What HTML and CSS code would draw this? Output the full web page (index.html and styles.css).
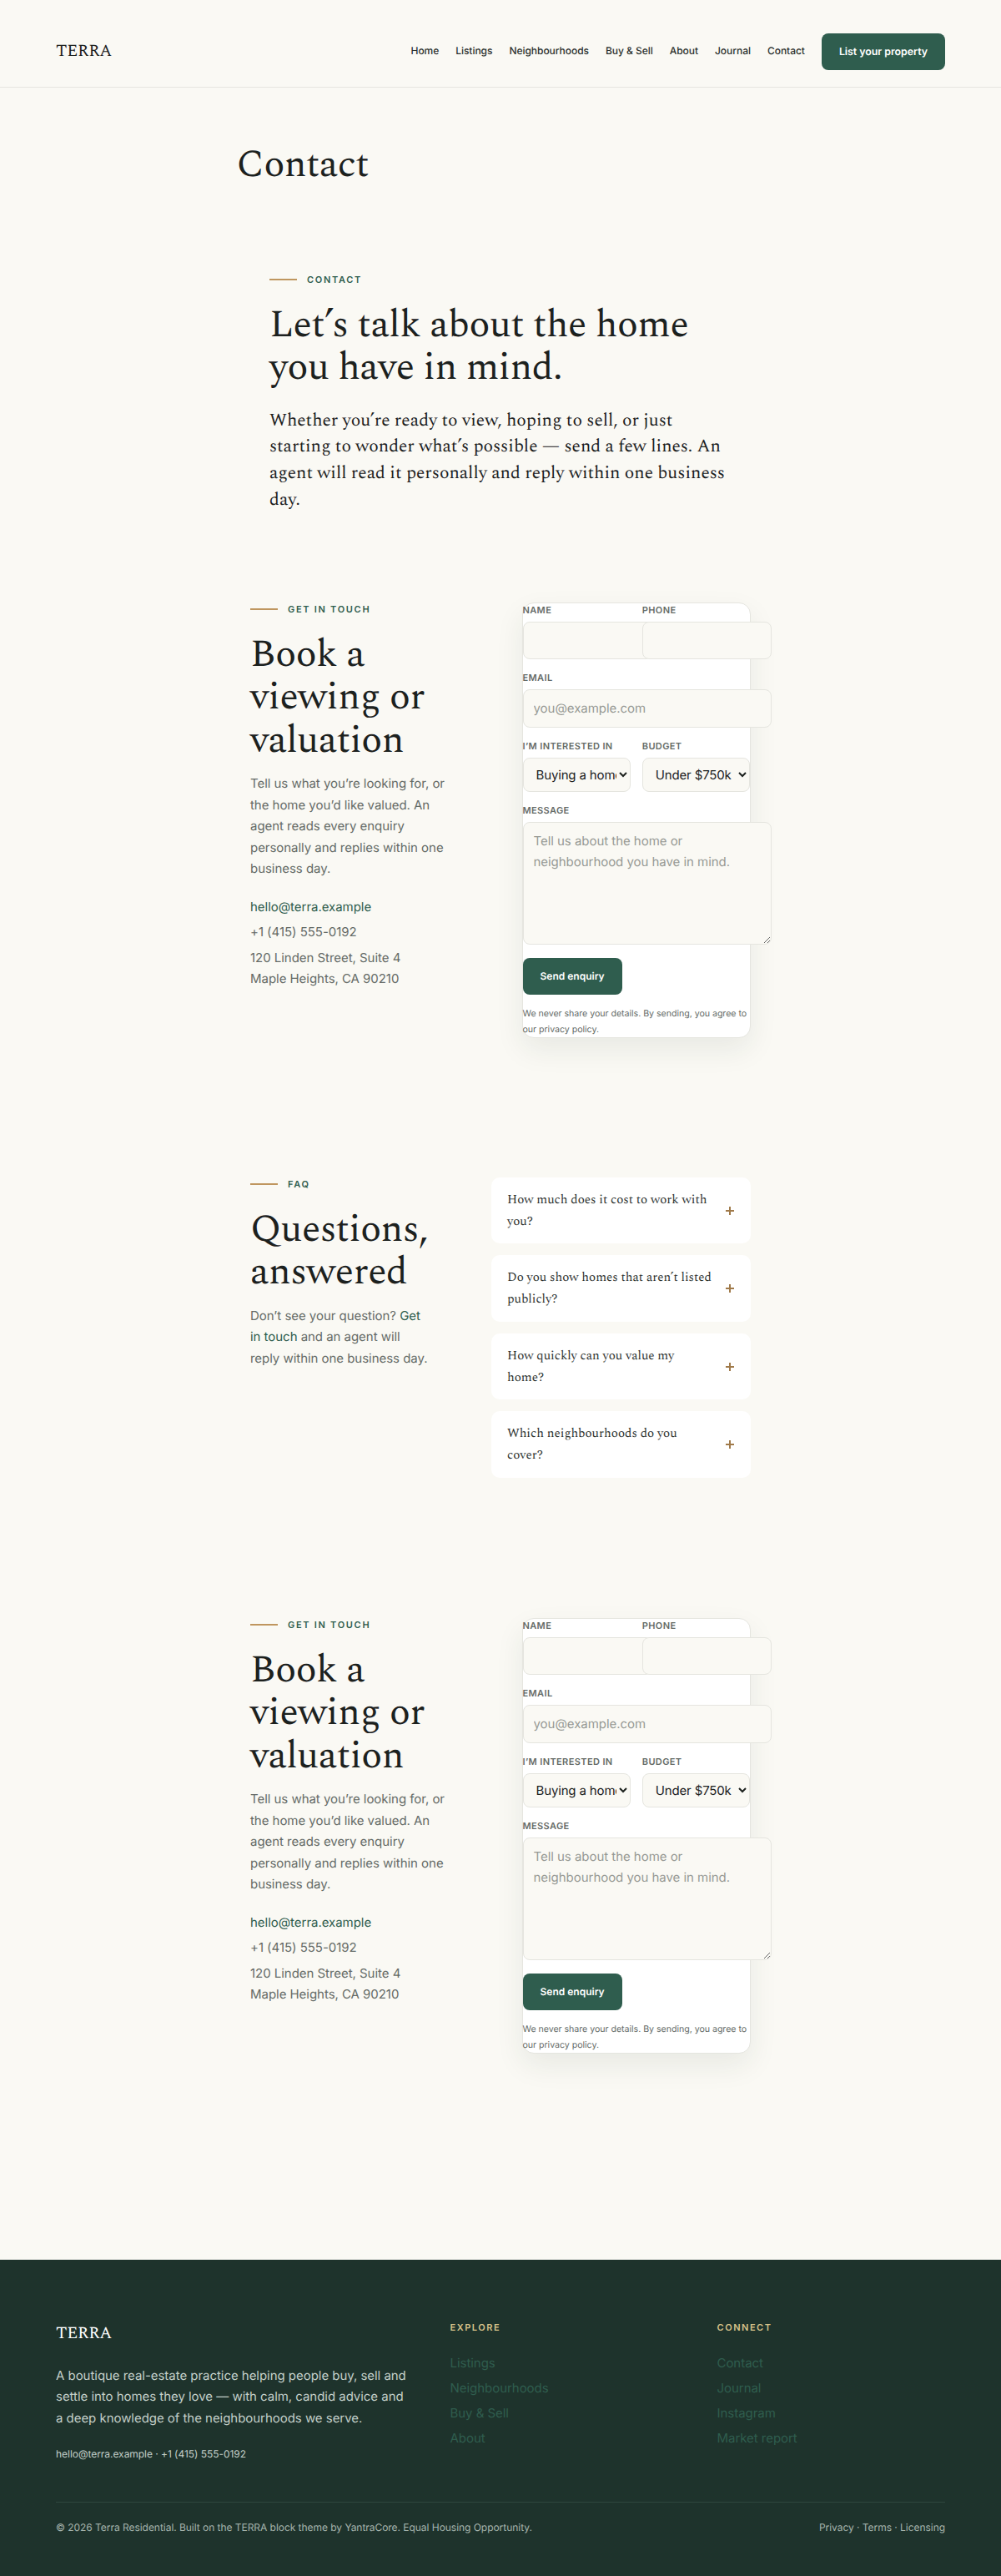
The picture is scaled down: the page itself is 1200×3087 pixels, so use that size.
FILE: index.html
```html
<!DOCTYPE html>
<html lang="en">
<head>
    <meta charset="UTF-8">
    <meta name="viewport" content="width=device-width, initial-scale=1.0">
    <title>Contact - TERRA</title>
    <link rel="stylesheet" href="styles.css">
</head>
<body>
    <header class="site-header">
        <a href="#" class="logo">TERRA</a>
        <nav class="main-nav">
            <a href="#">Home</a>
            <a href="#">Listings</a>
            <a href="#">Neighbourhoods</a>
            <a href="#">Buy &amp; Sell</a>
            <a href="#">About</a>
            <a href="#">Journal</a>
            <a href="#">Contact</a>
            <a href="#" class="btn">List your property</a>
        </nav>
    </header>

    <main>
        <h1 class="page-title">Contact</h1>

        <section class="intro">
            <p class="eyebrow">Contact</p>
            <h2>Let’s talk about the home<br>you have in mind.</h2>
            <p class="lead">Whether you’re ready to view, hoping to sell, or just<br>starting to wonder what’s possible — send a few lines. An<br>agent will read it personally and reply within one business<br>day.</p>
        </section>

        <section class="enquiry">
            <div class="enquiry-text">
                <p class="eyebrow">Get in touch</p>
                <h2>Book a<br>viewing or<br>valuation</h2>
                <p class="muted">Tell us what you’re looking for, or the home you’d like valued. An agent reads every enquiry personally and replies within one business day.</p>
                <div class="contact-lines">
                    <a href="#">hello@terra.example</a>
                    <span>+1 (415) 555-0192</span>
                    <span>120 Linden Street, Suite 4<br>Maple Heights, CA 90210</span>
                </div>
            </div>
            <form class="enquiry-form">
                <div class="form-row">
                    <div class="field">
                        <label>Name</label>
                        <input type="text">
                    </div>
                    <div class="field">
                        <label>Phone</label>
                        <input type="tel">
                    </div>
                </div>
                <div class="field">
                    <label>Email</label>
                    <input type="email" placeholder="you@example.com">
                </div>
                <div class="form-row">
                    <div class="field">
                        <label>I’m interested in</label>
                        <select><option>Buying a home</option></select>
                    </div>
                    <div class="field">
                        <label>Budget</label>
                        <select><option>Under $750k</option></select>
                    </div>
                </div>
                <div class="field">
                    <label>Message</label>
                    <textarea rows="5" placeholder="Tell us about the home or neighbourhood you have in mind."></textarea>
                </div>
                <button type="button" class="btn btn-send">Send enquiry</button>
                <p class="form-note">We never share your details. By sending, you agree to our privacy policy.</p>
            </form>
        </section>

        <section class="faq">
            <div class="faq-text">
                <p class="eyebrow">FAQ</p>
                <h2>Questions,<br>answered</h2>
                <p class="muted">Don’t see your question? <a href="#">Get in touch</a> and an agent will reply within one business day.</p>
            </div>
            <div class="faq-list">
                <div class="faq-item"><span>How much does it cost to work with<br>you?</span><i class="plus"></i></div>
                <div class="faq-item"><span>Do you show homes that aren’t listed<br>publicly?</span><i class="plus"></i></div>
                <div class="faq-item"><span>How quickly can you value my<br>home?</span><i class="plus"></i></div>
                <div class="faq-item"><span>Which neighbourhoods do you<br>cover?</span><i class="plus"></i></div>
            </div>
        </section>

        <section class="enquiry">
            <div class="enquiry-text">
                <p class="eyebrow">Get in touch</p>
                <h2>Book a<br>viewing or<br>valuation</h2>
                <p class="muted">Tell us what you’re looking for, or the home you’d like valued. An agent reads every enquiry personally and replies within one business day.</p>
                <div class="contact-lines">
                    <a href="#">hello@terra.example</a>
                    <span>+1 (415) 555-0192</span>
                    <span>120 Linden Street, Suite 4<br>Maple Heights, CA 90210</span>
                </div>
            </div>
            <form class="enquiry-form">
                <div class="form-row">
                    <div class="field">
                        <label>Name</label>
                        <input type="text">
                    </div>
                    <div class="field">
                        <label>Phone</label>
                        <input type="tel">
                    </div>
                </div>
                <div class="field">
                    <label>Email</label>
                    <input type="email" placeholder="you@example.com">
                </div>
                <div class="form-row">
                    <div class="field">
                        <label>I’m interested in</label>
                        <select><option>Buying a home</option></select>
                    </div>
                    <div class="field">
                        <label>Budget</label>
                        <select><option>Under $750k</option></select>
                    </div>
                </div>
                <div class="field">
                    <label>Message</label>
                    <textarea rows="5" placeholder="Tell us about the home or neighbourhood you have in mind."></textarea>
                </div>
                <button type="button" class="btn btn-send">Send enquiry</button>
                <p class="form-note">We never share your details. By sending, you agree to our privacy policy.</p>
            </form>
        </section>
    </main>

    <footer class="site-footer">
        <div class="footer-grid">
            <div class="footer-about">
                <a href="#" class="logo">TERRA</a>
                <p>A boutique real-estate practice helping people buy, sell and settle into homes they love — with calm, candid advice and a deep knowledge of the neighbourhoods we serve.</p>
                <p class="footer-contact">hello@terra.example · +1 (415) 555-0192</p>
            </div>
            <div class="footer-col">
                <h3>Explore</h3>
                <a href="#">Listings</a>
                <a href="#">Neighbourhoods</a>
                <a href="#">Buy &amp; Sell</a>
                <a href="#">About</a>
            </div>
            <div class="footer-col">
                <h3>Connect</h3>
                <a href="#">Contact</a>
                <a href="#">Journal</a>
                <a href="#">Instagram</a>
                <a href="#">Market report</a>
            </div>
        </div>
        <div class="footer-bottom">
            <span>© 2026 Terra Residential. Built on the TERRA block theme by YantraCore. Equal Housing Opportunity.</span>
            <span>Privacy · Terms · Licensing</span>
        </div>
    </footer>
</body>
</html>
```
FILE: styles.css
```css
:root {
    --bg: #faf9f4;
    --ink: #1c211e;
    --muted: #656b67;
    --green: #2f5d4e;
    --dark: #1e332c;
    --tan: #bf965f;
    --line: #e5e5df;
    --serif: 'Spectral', 'Liberation Serif', serif;
}

body {
    margin: 0;
    background: var(--bg);
    color: var(--ink);
    font-family: 'Inter', sans-serif;
    font-size: 15px;
    line-height: 1.7;
    letter-spacing: -0.04px;
    text-rendering: geometricPrecision;
}

h1, h2, h3, p {
    margin: 0;
}

a {
    color: var(--green);
    text-decoration: none;
}

h1, h2 {
    font-family: var(--serif);
    font-weight: 400;
    font-size: 46px;
    line-height: 51.5px;
    letter-spacing: -0.011em;
    white-space: nowrap;
}

/* Header */
.site-header {
    display: flex;
    justify-content: space-between;
    align-items: center;
    height: 105px;
    padding: 19px 67px 0;
    box-sizing: border-box;
    border-bottom: 1px solid var(--line);
}

.logo {
    font-family: var(--serif);
    font-size: 20px;
    letter-spacing: -0.01em;
    color: var(--ink);
}

.main-nav {
    display: flex;
    align-items: center;
    gap: 20px;
    font-size: 12px;
    font-weight: 500;
}

.main-nav a {
    color: #2b302d;
}

.btn, .main-nav .btn {
    background: var(--green);
    color: #fff;
    font-family: 'Inter', sans-serif;
    font-size: 12px;
    font-weight: 600;
    line-height: 20px;
    padding: 12px 21px;
    border: 0;
    border-radius: 8px;
}

.main-nav .btn {
    font-size: 12.4px;
}

/* Page intro */
.page-title {
    margin: 68px 0 0 283.5px;
}

.eyebrow {
    display: flex;
    align-items: center;
    gap: 12px;
    color: var(--green);
    font-size: 11px;
    font-weight: 600;
    line-height: 19px;
    letter-spacing: 0.155em;
    text-transform: uppercase;
}

.eyebrow::before {
    content: "";
    width: 33px;
    height: 2px;
    background: var(--tan);
}

h2 {
    margin-top: 20px;
}

.intro {
    width: 554px;
    margin: 101px auto 0;
}

.lead {
    margin-top: 20px;
    font-family: var(--serif);
    font-size: 21.3px;
    line-height: 31.8px;
    letter-spacing: 0;
    white-space: nowrap;
}

/* Enquiry */
.enquiry, .faq {
    display: grid;
    width: 600px;
    margin: 106px auto 0;
}

.enquiry {
    grid-template-columns: 238px 274.5px;
    justify-content: space-between;
}

.muted {
    margin-top: 12px;
    color: var(--muted);
}

.contact-lines {
    display: flex;
    flex-direction: column;
    gap: 5px;
    margin-top: 20px;
    color: var(--muted);
}

.enquiry-form {
    display: flex;
    flex-direction: column;
    gap: 14px;
    margin-top: 1px;
    background: #fff;
    border: 1px solid var(--line);
    border-radius: 14px;
    box-shadow: 0 14px 34px rgba(30, 51, 44, 0.08);
}

.form-row {
    display: grid;
    grid-template-columns: 1fr 1fr;
    gap: 14px;
}

.field {
    display: flex;
    flex-direction: column;
    align-items: flex-start;
    min-width: 0;
}

.field label {
    margin-bottom: 5px;
    color: var(--muted);
    font-size: 11px;
    font-weight: 600;
    line-height: 17px;
    letter-spacing: 0.035em;
    text-transform: uppercase;
    white-space: nowrap;
}

.field input, .field select, .field textarea {
    width: 100%;
    margin: 0;
    padding: 9px 12px;
    background: var(--bg);
    color: var(--ink);
    font: inherit;
    letter-spacing: inherit;
    text-rendering: inherit;
    border: 1px solid var(--line);
    border-radius: 8px;
}

.field select {
    padding: 9px 0 9px 11px;
    letter-spacing: -0.15px;
}

.field ::placeholder {
    color: #979994;
}

.btn-send {
    align-self: flex-start;
    margin-top: 2px;
    text-rendering: inherit;
}

.form-note {
    color: var(--muted);
    font-size: 10.65px;
    line-height: 18.4px;
}

/* FAQ */
.faq {
    grid-template-columns: 216px 311px;
    justify-content: space-between;
    margin: 167px auto;
}

.faq-text {
    margin-top: -1.5px;
}

.faq-list {
    display: flex;
    flex-direction: column;
    gap: 14px;
}

.faq-item {
    display: flex;
    align-items: center;
    justify-content: space-between;
    padding: 14px 20px 14px 19px;
    background: #fff;
    border-radius: 10px;
    color: #2d322f;
    font-family: var(--serif);
    font-size: 15px;
    line-height: 25.7px;
    letter-spacing: 0;
    white-space: nowrap;
}

.faq ~ .enquiry {
    margin-top: 0;
}

.plus {
    width: 10px;
    height: 10px;
    background:
        linear-gradient(#a07a4a, #a07a4a) center / 10px 2px no-repeat,
        linear-gradient(#a07a4a, #a07a4a) center / 2px 10px no-repeat;
}

/* Footer */
.site-footer {
    margin-top: 247px;
    padding: 72px 67px 50px;
    background: var(--dark);
    color: #c3cfc9;
}

.footer-grid {
    display: grid;
    grid-template-columns: 424.5px 272px 1fr;
    column-gap: 48px;
}

.site-footer .logo {
    color: #fff;
}

.footer-about p {
    margin-top: 20px;
}

.footer-about .footer-contact {
    margin-top: 21px;
    font-size: 12px;
}

.footer-col {
    display: flex;
    flex-direction: column;
    gap: 4.5px;
}

.footer-col h3 {
    margin-bottom: 16px;
    color: #d9c38a;
    font-size: 11px;
    font-weight: 600;
    line-height: 19px;
    letter-spacing: 0.14em;
    text-transform: uppercase;
}

.footer-bottom {
    display: flex;
    justify-content: space-between;
    margin-top: 46px;
    padding-top: 20px;
    border-top: 1px solid #30473f;
    font-size: 12px;
    color: #a5b3ac;
}
```
